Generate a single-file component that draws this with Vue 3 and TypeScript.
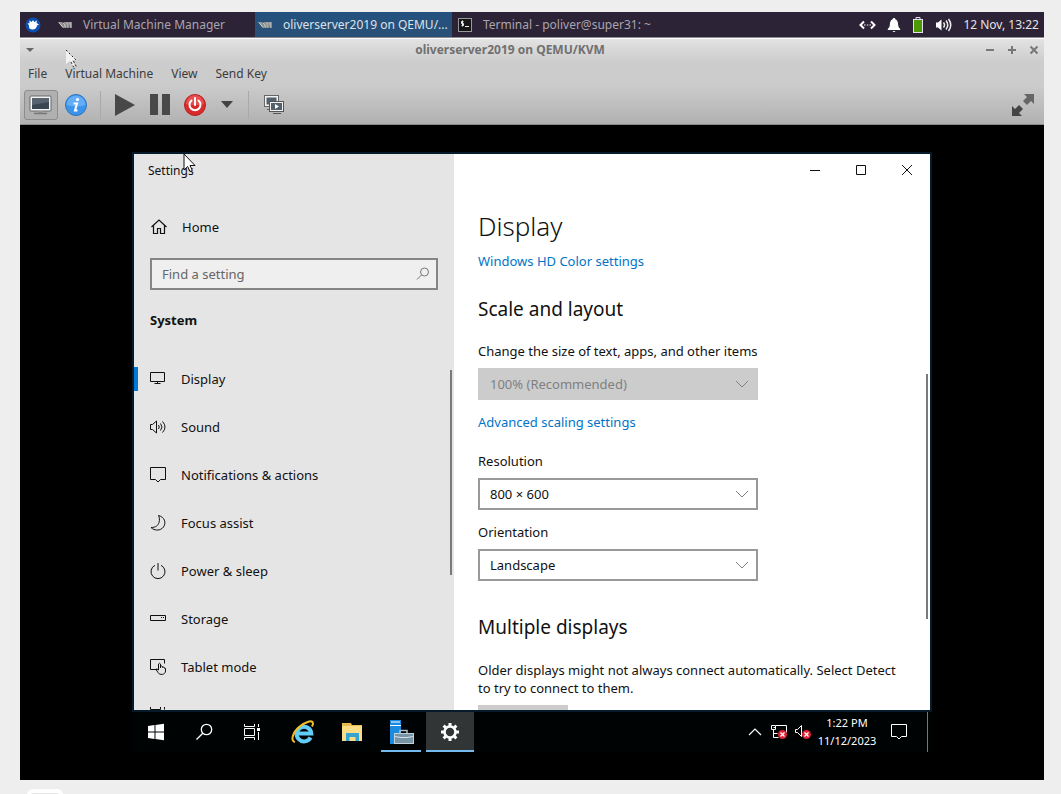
<script setup lang="ts">
import { ref } from 'vue'

interface Shape {
  d: string
}

interface NavItem {
  label: string
  icon: Shape
}

const tasks = [
  { label: 'Virtual Machine Manager', icon: 'vm', active: false },
  { label: 'oliverserver2019 on QEMU/...', icon: 'vm', active: true },
  { label: 'Terminal - poliver@super31: ~', icon: 'term', active: false },
]

const menus = ['File', 'Virtual Machine', 'View', 'Send Key']

const navItems: NavItem[] = [
  { label: 'Display', icon: { d: 'M.5 1.5h14v9h-14zM7.5 10.5v2M4.5 12.5h6' } },
  { label: 'Sound', icon: { d: 'M.5 5.5h2l4-3.500v12l-4-3.500h-2zM8.500 6q1.500 2 0 4M10.500 4.500q3 3.500 0 7M12.500 2.500q5 5.500 0 11' } },
  { label: 'Notifications & actions', icon: { d: 'M.5 .5h15v12h-5l-2.500 2.500-2.500-2.500h-5z' } },
  { label: 'Focus assist', icon: { d: 'M8.500 .5c6 1.500 8 7 5 11.500c-3 4-9 4-12.500 .5c5 0 7-2 8-5c.8-2.500 .5-5-.5-7z' } },
  { label: 'Power & sleep', icon: { d: 'M8 0v7.500M5 2.300a7 7 0 1 0 6 0' } },
  { label: 'Storage', icon: { d: 'M.5 4.500h15v5h-15zM11 6.500h1M13 6.500h1' } },
  { label: 'Tablet mode', icon: { d: 'M7 10.500H.5v-10h14v4M8.500 11V5q1-1.500 2 0v4V7.500q1-1 2 0v1q1-1 1.500 0v.5q1.500-.5 1.500 1v2c0 4-6 4.500-7.500 1.500l-2-3q.5-1.500 2.500 .5' } },
]

const nextIcon = 'M.5 0v2.500h10V0M14.500 0v2.500M.5 5.500h10v6h-10z'

const activeNav = ref('Display')
const query = ref('')
const scale = ref('100% (Recommended)')
const resolution = ref('800 × 600')
const orientation = ref('Landscape')
</script>

<template>
  <div class="page">
    <main class="desktop">
      <header class="panel">
        <button class="whisker" aria-label="Applications">
          <svg width="16" height="16" viewBox="0 0 16 16">
            <circle cx="8" cy="8" r="7.500" fill="#0b4fb0" />
            <path d="M2.500 6l2 .5L4.500 3.500l2.300 1.500L8 3l1.300 2L12 3.500l-.5 2.500L14 7.500l-2 1c-.3 2.500-2 4-4.500 4S3.500 11 4 8.500z" fill="#fff" />
          </svg>
        </button>
        <button v-for="t in tasks" :key="t.label" class="task" :class="{ active: t.active }">
          <svg v-if="t.icon === 'vm'" width="15" height="16" viewBox="0 0 15 16">
            <path d="M0 5h4l2 3V5h8v6h-2V7.500h-1V11H9V7.500H8V11H5z" fill="#8f8f8f" />
            <path d="M1 5.500l4 5M5 5.500l3 5M9 5.500v5M12 5.500v5" stroke="#d0d0cc" fill="none" />
          </svg>
          <svg v-else width="15" height="16" viewBox="0 0 15 16">
            <rect x=".5" y="1.500" width="13" height="13" fill="#151515" stroke="#999" />
            <path d="M5.500 4.500h-2v2h2v2h-2M4.500 3.500v6M7 9.500h4" stroke="#eee" fill="none" />
          </svg>
          <span>{{ t.label }}</span>
        </button>
        <div class="indicators">
          <svg width="17" height="16" viewBox="0 0 17 16" fill="none" stroke="#fff">
            <path d="M5 4.500L1.500 8L5 11.500M12 4.500L15.500 8L12 11.500" stroke-width="2" />
            <path d="M5 8h1.500M7.800 8h1.500M10.500 8h1.500" />
          </svg>
          <svg width="14" height="16" viewBox="0 0 14 16" fill="#fff">
            <path d="M7 1c1 0 1.300.6 1.300 1.300C10.500 3 11 5 11.200 8c.1 2 .8 2.500 2 4v1H.8v-1c1.200-1.500 1.900-2 2-4C3 5 3.500 3 5.700 2.300C5.700 1.600 6 1 7 1zM5.500 14h3q-1.500 2-3 0z" />
          </svg>
          <svg width="12" height="16" viewBox="0 0 12 16">
            <path d="M4 2V.5h4V2" fill="none" stroke="#e6e0ec" />
            <rect x="1.500" y="2.500" width="9" height="13" fill="#4e9a06" stroke="#e6e0ec" />
          </svg>
          <svg width="17" height="16" viewBox="0 0 17 16">
            <path d="M1 5.500h2L6.500 2.500v11L3 10.500H1z" fill="#fff" />
            <path d="M8.500 5.500q2 2.500 0 5M11 3.500q3.500 4.500 0 9M13.500 2q4.500 6 0 12" fill="none" stroke="#eee" stroke-width="1.500" />
          </svg>
          <time>12 Nov, 13:22</time>
        </div>
      </header>

      <section class="chrome">
        <div class="titlebar">
          <button class="wm" aria-label="Window menu">
            <svg width="10" height="6" viewBox="0 0 10 6"><path d="M1 1h8L5 5z" fill="#666" /></svg>
          </button>
          <h1 class="title">oliverserver2019 on QEMU/KVM</h1>
          <div class="wm-group">
            <button class="wm" aria-label="Minimize"><svg width="10" height="10" viewBox="0 0 10 10"><path d="M1 5h8" stroke="#777" stroke-width="2" /></svg></button>
            <button class="wm" aria-label="Maximize"><svg width="10" height="10" viewBox="0 0 10 10"><path d="M1 5h8M5 1v8" stroke="#777" stroke-width="2" /></svg></button>
            <button class="wm" aria-label="Close"><svg width="10" height="10" viewBox="0 0 10 10"><path d="M1.500 1.500l7 7M8.500 1.500l-7 7" stroke="#777" stroke-width="2" /></svg></button>
          </div>
        </div>
        <nav class="menubar">
          <button v-for="m in menus" :key="m">{{ m }}</button>
        </nav>
        <div class="toolbar">
          <button class="tool pressed" aria-label="Console">
            <svg width="24" height="20" viewBox="0 0 24 20">
              <rect x="1" y="1" width="21" height="15" rx="1" fill="#f4f4f4" stroke="#666" />
              <rect x="3" y="3" width="17" height="11" fill="#3a4652" />
              <path d="M3 3h17v4L3 10z" fill="#57646f" />
              <path d="M9 16h5v2H9z" fill="#999" />
              <path d="M5 18.500h13" stroke="#777" stroke-width="1.500" />
            </svg>
          </button>
          <button class="tool wide" aria-label="Details">
            <svg width="24" height="24" viewBox="0 0 24 24">
              <circle cx="12" cy="12" r="10.500" fill="#3d93ea" stroke="#2c74c0" />
              <path d="M2.500 12a9.500 9.500 0 0 1 19 0q-9 3-19 0z" fill="#62adf5" />
              <circle cx="13.500" cy="6.500" r="1.600" fill="#fff" />
              <path d="M9.500 10.500h3.500L11 17.500h2.500" fill="none" stroke="#fff" stroke-width="2" />
            </svg>
          </button>
          <span class="sep"></span>
          <button class="tool" aria-label="Run">
            <svg width="22" height="24" viewBox="0 0 22 24"><path d="M1 1l20 11L1 23z" fill="#484848" /></svg>
          </button>
          <button class="tool" aria-label="Pause">
            <svg width="22" height="24" viewBox="0 0 22 24"><path d="M1 1h8v21H1zM13 1h8v21h-8z" fill="#484848" /></svg>
          </button>
          <button class="tool" aria-label="Shut down">
            <svg width="24" height="24" viewBox="0 0 24 24">
              <circle cx="12" cy="12" r="10.500" fill="#d92b2b" stroke="#b51f22" />
              <path d="M3 11a9 9 0 0 1 18 0q-9 2-18 0z" fill="#e85050" />
              <path d="M12 5v7M8.500 7.500a5.500 5.500 0 1 0 7 0" fill="none" stroke="#fff" stroke-width="2" stroke-linecap="round" />
            </svg>
          </button>
          <button class="tool narrow" aria-label="Shutdown options">
            <svg width="12" height="7" viewBox="0 0 12 7"><path d="M0 0h12L6 7z" fill="#444" /></svg>
          </button>
          <span class="sep"></span>
          <button class="tool shot" aria-label="Snapshots">
            <svg width="22" height="22" viewBox="0 0 22 22">
              <rect x="1.500" y="1.500" width="14" height="11" fill="#f2f2f2" stroke="#666" />
              <rect x="3.500" y="3.500" width="10" height="7" fill="#53616d" />
              <path d="M4 15.500h3" stroke="#666" />
              <rect x="6.500" y="7.500" width="14" height="10" fill="#f2f2f2" stroke="#555" />
              <rect x="8" y="9" width="11" height="7" fill="#53616d" />
              <path d="M12 10l4 2.500-4 2.500z" fill="#fff" />
              <path d="M10 19.500h8" stroke="#555" />
            </svg>
          </button>
          <button class="tool full" aria-label="Fullscreen">
            <svg width="24" height="24" viewBox="0 0 24 24">
              <path d="M13 1h10v10l-3-3-4 4-4-4 4-4z" fill="#666" />
              <path d="M1 13l3 3 4-4 4 4-4 4 3 3H1z" fill="#444" />
            </svg>
          </button>
        </div>
        <svg class="host-pointer" width="14" height="20" viewBox="0 0 14 20">
          <path d="M1 1v14l4-3 3 6 2-1-3-6h5z" fill="#f2f2f2" />
          <path d="M1 1l11 11M6 13l3 6M8.500 12l3 6" fill="none" stroke="#222" stroke-dasharray="2 2" />
        </svg>
      </section>

      <section class="viewer">
        <div class="guest">
          <div class="settings">
            <aside class="sidebar">
              <div class="app-title">Settings</div>
              <button class="home">
                <svg width="16" height="16" viewBox="0 0 16 16" fill="none" stroke="#111"><path d="M.5 8L8 1l7.500 7M2.500 6.500v8h4v-5h3v5h4v-8" stroke-width="1.200" /></svg>
                <span>Home</span>
              </button>
              <label class="search">
                <input v-model="query" type="text" placeholder="Find a setting" aria-label="Find a setting" />
                <svg width="14" height="14" viewBox="0 0 14 14" fill="none" stroke="#777"><circle cx="8.500" cy="5" r="4" /><path d="M5.500 8L1 12.500" /></svg>
              </label>
              <h2 class="group">System</h2>
              <nav class="nav">
                <button v-for="n in navItems" :key="n.label" :class="{ current: n.label === activeNav }" @click="activeNav = n.label">
                  <svg width="17" height="17" viewBox="0 0 17 17" fill="none" stroke="#111"><path :d="n.icon.d" /></svg>
                  <span>{{ n.label }}</span>
                </button>
                <button aria-label="Multitasking">
                  <svg width="17" height="17" viewBox="0 0 17 17" fill="none" stroke="#111"><path :d="nextIcon" /></svg>
                </button>
                <span class="nav-scroll"></span>
              </nav>
            </aside>

            <section class="content">
              <div class="caption">
                <button aria-label="Minimize settings"><svg width="12" height="12" viewBox="0 0 12 12"><path d="M1 6.500h10" stroke="#111" /></svg></button>
                <button aria-label="Maximize settings"><svg width="12" height="12" viewBox="0 0 12 12"><path d="M1.500 1.500h9v9h-9z" stroke="#111" fill="none" /></svg></button>
                <button aria-label="Close settings"><svg width="12" height="12" viewBox="0 0 12 12"><path d="M1 1l10 10M11 1L1 11" stroke="#111" /></svg></button>
              </div>
              <div class="body">
                <h1>Display</h1>
                <a href="#hd">Windows HD Color settings</a>
                <h2>Scale and layout</h2>
                <label for="scale">Change the size of text, apps, and other items</label>
                <div class="pick off">
                  <select id="scale" v-model="scale" disabled><option>100% (Recommended)</option></select>
                  <svg width="14" height="8" viewBox="0 0 14 8"><path d="M1 1l6 6 6-6" /></svg>
                </div>
                <a href="#scaling" class="after-pick">Advanced scaling settings</a>
                <label for="resolution" class="after-link">Resolution</label>
                <div class="pick">
                  <select id="resolution" v-model="resolution"><option>800 × 600</option></select>
                  <svg width="14" height="8" viewBox="0 0 14 8"><path d="M1 1l6 6 6-6" /></svg>
                </div>
                <label for="orientation" class="after-pick">Orientation</label>
                <div class="pick">
                  <select id="orientation" v-model="orientation"><option>Landscape</option></select>
                  <svg width="14" height="8" viewBox="0 0 14 8"><path d="M1 1l6 6 6-6" /></svg>
                </div>
                <h2 class="multi">Multiple displays</h2>
                <p>Older displays might not always connect automatically. Select Detect to try to connect to them.</p>
                <button class="detect" aria-label="Detect"></button>
              </div>
              <span class="content-scroll"></span>
            </section>
          </div>

          <footer class="taskbar">
            <button aria-label="Start"><svg width="18" height="18" viewBox="0 0 18 18" fill="#fff"><path d="M1 3l6.500-1v6.500H1zM8.500 1.900L17 .8v7.700H8.500zM1 9.500h6.500V16L1 15zM8.500 9.500H17v7.700l-8.500-1.100z" /></svg></button>
            <button aria-label="Search"><svg width="18" height="18" viewBox="0 0 18 18" fill="none" stroke="#fff" stroke-width="1.300"><circle cx="11.500" cy="6.500" r="5.200" /><path d="M7.800 10.200L1.500 16.500" /></svg></button>
            <button aria-label="Task view"><svg width="18" height="18" viewBox="0 0 18 18" fill="none" stroke="#fff"><path d="M1.500 1v2.500h10V1M1.500 17v-2.500h10V17M1.500 5.500h10v7h-10zM15.500 1v3M15.500 9v8" /><path d="M14 5h3v3h-3z" fill="#fff" stroke="none" /></svg></button>
            <div class="pins">
              <button aria-label="Internet Explorer">
                <svg width="24" height="24" viewBox="0 0 24 24">
                  <path d="M19.500 17.500A7.300 7.300 0 1 1 20.300 13.500H7" fill="none" stroke="#62cdf6" stroke-width="4" />
                  <path d="M4 22C-1 21 2 12 8 7S22-1 22 3.500c0 1-.3 1.500-1 3" fill="none" stroke="#f5bd27" stroke-width="2" />
                </svg>
              </button>
              <button aria-label="File Explorer">
                <svg width="24" height="22" viewBox="0 0 24 22">
                  <path d="M2 2h9l1 2h10v16H2z" fill="#e8b951" />
                  <path d="M2 5h20v15H2z" fill="#fbdc87" />
                  <path d="M6 20v-8h13v8h-3.500v-4h-6v4z" fill="#36a3d0" />
                </svg>
              </button>
              <button aria-label="Server Manager" class="running">
                <svg width="26" height="26" viewBox="0 0 26 26">
                  <path d="M2 1h11v24H2z" fill="#1a8be0" />
                  <path d="M2 6.500h11M3 3h9" stroke="#fff" />
                  <path d="M12 14v-2.500h7V14" fill="none" stroke="#a9bdca" stroke-width="1.500" />
                  <rect x="6.500" y="14.500" width="19" height="10" fill="#7895a8" stroke="#c2d0da" />
                  <path d="M7 17.500l6 1h6l6-1M14 18.500h4" stroke="#d4e0e8" fill="none" />
                </svg>
              </button>
              <button aria-label="Settings window" class="focused">
                <svg width="20" height="20" viewBox="0 0 20 20" fill="none" stroke="#fff">
                  <circle cx="10" cy="10" r="5.500" stroke-width="2.600" />
                  <path d="M10 1v3M10 16v3M1 10h3M16 10h3M3.600 3.600l2.200 2.200M14.200 14.200l2.200 2.200M16.400 3.600l-2.200 2.200M5.800 14.200l-2.200 2.200" stroke-width="3" />
                </svg>
              </button>
            </div>
            <div class="tray">
              <button aria-label="Hidden icons"><svg width="14" height="8" viewBox="0 0 14 8" fill="none" stroke="#fff"><path d="M1 7l6-6 6 6" stroke-width="1.200" /></svg></button>
              <button aria-label="Network">
                <svg width="18" height="16" viewBox="0 0 18 16">
                  <path d="M1.500 1.500h4v4h-4zM3.500 5.500v8h5M6 3.500H3.500M6 1.500h10.500v7M3.500 9.500h4" fill="none" stroke="#fff" />
                  <circle cx="12.500" cy="10.500" r="4.500" fill="#df2035" /><path d="M10.500 8.500l4 4M14.500 8.500l-4 4" stroke="#fff" stroke-width="1.300" />
                </svg>
              </button>
              <button aria-label="Volume">
                <svg width="18" height="16" viewBox="0 0 18 16">
                  <path d="M1.500 5.500h2l4-4v11l-4-4h-2z" fill="none" stroke="#fff" />
                  <circle cx="12.500" cy="10.500" r="4.500" fill="#df2035" /><path d="M10.500 8.500l4 4M14.500 8.500l-4 4" stroke="#fff" stroke-width="1.300" />
                </svg>
              </button>
              <time class="clock"><span>1:22 PM</span><span>11/12/2023</span></time>
              <button class="action" aria-label="Action center"><svg width="18" height="18" viewBox="0 0 18 18" fill="none" stroke="#fff"><path d="M1.500 1.500h15v12h-5L9 16l-2.500-2.500h-5z" /></svg></button>
              <span class="peek"></span>
            </div>
          </footer>

          <svg class="guest-pointer" width="13" height="20" viewBox="0 0 13 20">
            <path d="M1 1v16l3.700-3.500L7 18.500l2.300-1L7 12.500h5z" fill="#fff" stroke="#111" />
          </svg>
        </div>
      </section>
    </main>
    <div class="chip"></div>
  </div>
</template>

<style>
body {
  background: #eeeeee;
}
</style>

<style scoped>
* {
  box-sizing: border-box;
}
.page {
  height: 100vh;
  overflow: hidden;
  padding: 12px 17px 0 20px;
  background: #eeeeee;
  font-family: "Noto Sans", "Open Sans", sans-serif;
  color: #111;
}
button {
  display: flex;
  align-items: center;
  justify-content: center;
  padding: 0;
  border: 0;
  background: none;
  color: inherit;
  font: inherit;
  white-space: nowrap;
}
h1, h2, p {
  margin: 0;
}
svg {
  flex: none;
}
.panel {
  display: flex;
  height: 25px;
  background: #2c2336;
  color: #a9a5ae;
  font-size: 12px;
}
.whisker {
  width: 35px;
  padding-right: 9px;
}
.task {
  flex: 0 1 200px;
  min-width: 0;
  justify-content: flex-start;
  gap: 10px;
  padding-left: 3px;
  border-right: 3px solid #2c2336;
  overflow: hidden;
}
.task.active {
  background: linear-gradient(#23527f, #2a5076);
  color: #dde2e8;
}
.indicators {
  display: flex;
  align-items: center;
  gap: 11px;
  margin-left: auto;
  padding-right: 5px;
  color: #e4e2e6;
  white-space: nowrap;
}
.chrome {
  position: relative;
  height: 88px;
  border-top: 1px solid #8a8a8a;
  border-bottom: 1px solid #8a8a8a;
  background: linear-gradient(#e6e6e6, #dfdfdf 4px, #cdcdcd 24px, #cbcbcb 48px, #b1b1b1);
  box-shadow: inset 0 1px #fff;
  color: #3c3c3c;
  font-size: 12px;
}
.titlebar {
  display: flex;
  align-items: center;
  height: 24px;
  padding: 0 5px;
}
.title {
  flex: 1;
  text-align: center;
  color: #707070;
  font-size: 12px;
  line-height: 20px;
}
.wm {
  width: 10px;
  height: 20px;
}
.wm-group {
  display: flex;
  gap: 12px;
}
.menubar {
  display: flex;
  gap: 18px;
  height: 23px;
  padding-left: 8px;
}
.toolbar {
  display: flex;
  align-items: center;
  height: 39px;
  padding: 0 9px 0 4px;
}
.tool {
  width: 35px;
  height: 30px;
}
.tool.pressed {
  width: 34px;
  border: 1px solid #8d8d8d;
  border-radius: 3px;
  background: #b0b0b0;
}
.tool.wide {
  width: 36px;
}
.tool.narrow {
  width: 30px;
}
.tool.shot {
  width: 38px;
}
.tool.full {
  width: 24px;
  margin-left: auto;
}
.sep {
  width: 1px;
  height: 28px;
  margin: 0 6px;
  background: #a9a9a9;
}
.host-pointer {
  position: absolute;
  left: 45px;
  top: 11px;
}
.viewer {
  padding: 27px 112px 28px;
  background: #000;
}
.guest {
  position: relative;
  display: flex;
  flex-direction: column;
  aspect-ratio: 4 / 3;
  background: #000304;
}
.settings {
  display: flex;
  flex: 1;
  min-height: 0;
  border: 2px solid #071a2c;
  overflow: hidden;
  font-size: 13px;
  line-height: 20px;
}
.sidebar {
  display: flex;
  flex: 0 0 320px;
  flex-direction: column;
  background: #e5e5e5;
}
.app-title {
  height: 32px;
  padding-left: 14px;
  font-size: 12px;
  line-height: 34px;
}
.home {
  justify-content: flex-start;
  gap: 15px;
  height: 40px;
  margin-top: 21px;
  padding-left: 17px;
}
.search {
  display: flex;
  align-items: center;
  flex: none;
  height: 32px;
  margin: 11px 16px 0;
  padding: 0 6px 0 10px;
  border: 2px solid #858585;
  background: #efefef;
}
.search input {
  flex: 1;
  min-width: 0;
  padding: 0;
  border: 0;
  outline: 0;
  background: none;
  color: #111;
  font: inherit;
}
.search input::placeholder {
  color: #666;
  opacity: 1;
}
.group {
  flex: none;
  margin: 20px 16px 25px;
  font-size: 13px;
  line-height: 20px;
}
.nav {
  position: relative;
  flex: 1;
  min-height: 0;
  overflow: hidden;
}
.nav button {
  position: relative;
  justify-content: flex-start;
  gap: 14px;
  width: 100%;
  height: 48px;
  padding-left: 16px;
}
.nav button.current::before {
  content: "";
  position: absolute;
  left: 0;
  top: 12px;
  width: 4px;
  height: 24px;
  background: #0078d7;
}
.nav-scroll {
  position: absolute;
  right: 2px;
  top: 15px;
  width: 2px;
  height: 205px;
  background: #7a7a7a;
}
.content {
  position: relative;
  flex: 1;
  min-width: 0;
  background: #fff;
}
.caption {
  display: flex;
  justify-content: flex-end;
  height: 32px;
}
.caption button {
  width: 46px;
}
.body {
  display: flex;
  flex-direction: column;
  align-items: flex-start;
  padding: 22px 24px 0;
}
.body h1 {
  margin-bottom: 7px;
  font-size: 26px;
  font-weight: 300;
  line-height: 36px;
}
.body h2 {
  margin: 24px 0 18px;
  font-size: 19px;
  font-weight: 400;
  line-height: 28px;
}
.body h2.multi {
  margin: 32px 0 20px;
}
.body a {
  color: #0074c8;
  text-decoration: none;
}
.body .after-pick {
  margin-top: 12px;
}
.body .after-link {
  margin-top: 19px;
}
.pick {
  display: flex;
  position: relative;
  width: 280px;
  max-width: 100%;
  height: 32px;
  margin-top: 7px;
}
.pick select {
  appearance: none;
  width: 100%;
  padding: 0 36px 0 10px;
  border: 2px solid #999;
  border-radius: 0;
  background: #fff;
  color: #111;
  font: inherit;
}
.pick.off select {
  border-color: #ccc;
  background: #ccc;
  color: #808080;
  opacity: 1;
}
.pick svg {
  position: absolute;
  right: 9px;
  top: 12px;
  fill: none;
  stroke: #808080;
  pointer-events: none;
}
.body p {
  line-height: 18px;
}
.detect {
  width: 90px;
  height: 32px;
  margin-top: 8px;
  background: #ccc;
}
.content-scroll {
  position: absolute;
  right: 2px;
  top: 220px;
  width: 2px;
  height: 245px;
  background: #7a7a7a;
}
.taskbar {
  display: flex;
  flex: none;
  height: 40px;
  color: #fff;
}
.taskbar button {
  width: 48px;
}
.pins {
  display: flex;
  gap: 1px;
  margin-left: 3px;
}
.pins .running {
  background: linear-gradient(#76b9ed, #76b9ed) center bottom / 40px 2px no-repeat;
}
.pins .focused {
  border-top: 2px solid #323536;
  border-bottom: 2px solid #76b9ed;
  background: #323536;
}
.tray {
  display: flex;
  margin-left: auto;
}
.tray button {
  width: 24px;
}
.clock {
  display: flex;
  flex-direction: column;
  justify-content: center;
  width: 64px;
  font-size: 11px;
  line-height: 18px;
  text-align: center;
}
.tray .action {
  width: 40px;
}
.peek {
  width: 1px;
  margin: 0 4px 0 8px;
  background: #777;
}
.guest-pointer {
  position: absolute;
  left: 51px;
  top: 1px;
}
.chip {
  width: 36px;
  height: 24px;
  margin: 9px 0 0 7px;
  border: 4px solid #fff;
  border-radius: 6px;
  background: #e6e6e6;
}
</style>
